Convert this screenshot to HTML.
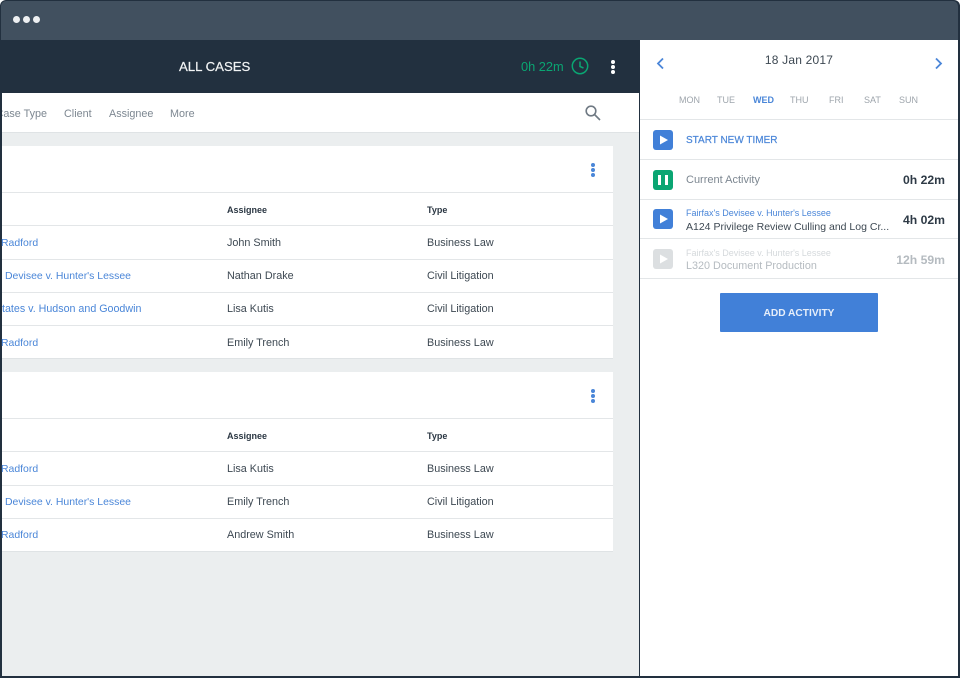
<!DOCTYPE html>
<html><head><meta charset="utf-8"><style>
html,body{margin:0;padding:0}
body{width:960px;height:678px;overflow:hidden;position:relative;background:#fff;font-family:"Liberation Sans",sans-serif}
#w{position:absolute;left:0;top:0;width:960px;height:678px;filter:blur(.3px)}
.b{position:absolute}
.t{position:absolute;white-space:nowrap;line-height:14px;font-size:10.8px;color:#3d4852}
.l{color:#4a86d8;font-size:10.45px}
.h{font-weight:bold;font-size:9px;color:#2b3743}
.g{color:#7d8791}
.line{position:absolute;height:1px;background:#e3e6e8}
.d{position:absolute;width:4px;height:4px;border-radius:50%;background:#4a86d8}
.ib{position:absolute;width:20px;height:20px;border-radius:3px;background:#4180d8}
.m{font-size:12.2px;font-weight:bold;color:#2e3a46}
</style></head><body><div id="w">
<div class="b" style="left:0;top:0;width:960px;height:678px;background:#22303f;border-radius:6px 6px 0 0"></div>
<div class="b" style="left:1px;top:1px;width:957px;height:39px;background:#41505f;border-radius:5px 5px 0 0"></div>
<div class="b" style="left:13px;top:16px;width:7px;height:7px;border-radius:50%;background:#eef0f2"></div>
<div class="b" style="left:23px;top:16px;width:7px;height:7px;border-radius:50%;background:#eef0f2"></div>
<div class="b" style="left:33px;top:16px;width:7px;height:7px;border-radius:50%;background:#eef0f2"></div>

<div class="b" style="left:2px;top:40px;width:637px;height:636px;background:#ebeeef"></div>
<div class="b" style="left:0;top:40px;width:639px;height:53px;background:#22303f"></div>
<div class="t" style="left:179px;top:60px;font-size:13.2px;color:#f2f4f5;-webkit-text-stroke:.2px #f2f4f5">ALL CASES</div>
<div class="t" style="left:521px;top:60px;font-size:12.8px;color:#0aa572">0h 22m</div>
<svg class="b" style="left:571px;top:57px" width="18" height="18" viewBox="0 0 18 18" fill="none" stroke="#0aa572" stroke-width="1.5"><circle cx="9" cy="9" r="7.7"/><path d="M9 4.5V9.5L12.5 11"/></svg>
<div class="d" style="left:611px;top:60px;width:4px;height:4px;background:#fff"></div>
<div class="d" style="left:611px;top:65px;width:4px;height:4px;background:#fff"></div>
<div class="d" style="left:611px;top:70px;width:4px;height:4px;background:#fff"></div>

<div class="b" style="left:2px;top:93px;width:637px;height:39px;background:#fff;border-bottom:1px solid #dfe3e5"></div>
<div class="t g" style="left:2px;top:107px;width:45px;overflow:hidden;direction:rtl">Case Type</div>
<div class="t g" style="left:64px;top:107px">Client</div>
<div class="t g" style="left:109px;top:107px">Assignee</div>
<div class="t g" style="left:170px;top:107px">More</div>
<svg class="b" style="left:584px;top:104px" width="18" height="18" viewBox="0 0 18 18" fill="none" stroke="#6f7983" stroke-width="1.6"><circle cx="7" cy="7" r="4.8"/><path d="M10.5 10.5L16 16"/></svg>

<!-- card 1 -->
<div class="b" style="left:2px;top:146px;width:611px;height:213px;background:#fff;border-bottom:1px solid #dfe3e5;box-sizing:border-box"></div>
<div class="d" style="left:591px;top:163px"></div><div class="d" style="left:591px;top:168px"></div><div class="d" style="left:591px;top:173px"></div>
<div class="line" style="left:2px;top:192px;width:611px"></div>
<div class="t h" style="left:227px;top:203px">Assignee</div>
<div class="t h" style="left:427px;top:203px">Type</div>
<div class="line" style="left:2px;top:225px;width:611px"></div>
<div class="t l" style="left:1px;top:237px">Radford</div><div class="t" style="left:227px;top:236px">John Smith</div><div class="t" style="left:427px;top:236px">Business Law</div>
<div class="line" style="left:2px;top:259px;width:611px"></div>
<div class="t l" style="left:5px;top:270px">Devisee v. Hunter's Lessee</div><div class="t" style="left:227px;top:269px">Nathan Drake</div><div class="t" style="left:427px;top:269px">Civil Litigation</div>
<div class="line" style="left:2px;top:292px;width:611px"></div>
<div class="t l" style="left:2px;top:302px;font-size:10.7px">tates v. Hudson and Goodwin</div><div class="t" style="left:227px;top:302px">Lisa Kutis</div><div class="t" style="left:427px;top:302px">Civil Litigation</div>
<div class="line" style="left:2px;top:325px;width:611px"></div>
<div class="t l" style="left:1px;top:337px">Radford</div><div class="t" style="left:227px;top:336px">Emily Trench</div><div class="t" style="left:427px;top:336px">Business Law</div>

<!-- card 2 -->
<div class="b" style="left:2px;top:372px;width:611px;height:180px;background:#fff;border-bottom:1px solid #dfe3e5;box-sizing:border-box"></div>
<div class="d" style="left:591px;top:389px"></div><div class="d" style="left:591px;top:394px"></div><div class="d" style="left:591px;top:399px"></div>
<div class="line" style="left:2px;top:418px;width:611px"></div>
<div class="t h" style="left:227px;top:429px">Assignee</div>
<div class="t h" style="left:427px;top:429px">Type</div>
<div class="line" style="left:2px;top:451px;width:611px"></div>
<div class="t l" style="left:1px;top:463px">Radford</div><div class="t" style="left:227px;top:462px">Lisa Kutis</div><div class="t" style="left:427px;top:462px">Business Law</div>
<div class="line" style="left:2px;top:485px;width:611px"></div>
<div class="t l" style="left:5px;top:496px">Devisee v. Hunter's Lessee</div><div class="t" style="left:227px;top:495px">Emily Trench</div><div class="t" style="left:427px;top:495px">Civil Litigation</div>
<div class="line" style="left:2px;top:518px;width:611px"></div>
<div class="t l" style="left:1px;top:529px">Radford</div><div class="t" style="left:227px;top:528px">Andrew Smith</div><div class="t" style="left:427px;top:528px">Business Law</div>

<!-- right panel -->
<div class="b" style="left:640px;top:40px;width:318px;height:636px;background:#fff"></div>
<svg class="b" style="left:655px;top:57px" width="10" height="13" viewBox="0 0 10 13" fill="none" stroke="#4a86d8" stroke-width="1.8"><path d="M8 1.5L3 6.5L8 11.5"/></svg>
<svg class="b" style="left:934px;top:57px" width="10" height="13" viewBox="0 0 10 13" fill="none" stroke="#4a86d8" stroke-width="1.8"><path d="M2 1.5L7 6.5L2 11.5"/></svg>
<div class="t" style="left:640px;width:318px;text-align:center;top:53px;font-size:12px;letter-spacing:.2px">18 Jan 2017</div>
<div class="t" style="left:679px;top:93px;font-size:9px;color:#9ea5ac">MON</div>
<div class="t" style="left:717px;top:93px;font-size:9px;color:#9ea5ac">TUE</div>
<div class="t" style="left:753px;top:93px;font-size:9px;color:#4a86d8;font-weight:bold">WED</div>
<div class="t" style="left:790px;top:93px;font-size:9px;color:#9ea5ac">THU</div>
<div class="t" style="left:829px;top:93px;font-size:9px;color:#9ea5ac">FRI</div>
<div class="t" style="left:864px;top:93px;font-size:9px;color:#9ea5ac">SAT</div>
<div class="t" style="left:899px;top:93px;font-size:9px;color:#9ea5ac">SUN</div>
<div class="line" style="left:640px;top:119px;width:318px"></div>
<div class="ib" style="left:653px;top:130px"></div>
<svg class="b" style="left:653px;top:130px" width="20" height="20"><path d="M7 5.5L15 10L7 14.5Z" fill="#fff"/></svg>
<div class="t l" style="left:686px;top:134px;font-size:10px;-webkit-text-stroke:.2px #4a86d8">START NEW TIMER</div>
<div class="line" style="left:640px;top:159px;width:318px"></div>
<div class="ib" style="left:653px;top:170px;background:#0aa572"></div>
<div class="b" style="left:658px;top:175px;width:3px;height:10px;background:#fff"></div>
<div class="b" style="left:665px;top:175px;width:3px;height:10px;background:#fff"></div>
<div class="t g" style="left:686px;top:173px;font-size:11px">Current Activity</div>
<div class="t m" style="right:15px;top:173px">0h 22m</div>
<div class="line" style="left:640px;top:199px;width:318px"></div>
<div class="ib" style="left:653px;top:209px"></div>
<svg class="b" style="left:653px;top:209px" width="20" height="20"><path d="M7 5.5L15 10L7 14.5Z" fill="#fff"/></svg>
<div class="t l" style="left:686px;top:206px;font-size:9px">Fairfax's Devisee v. Hunter's Lessee</div>
<div class="t" style="left:686px;top:220px;font-size:10.5px">A124 Privilege Review Culling and Log Cr...</div>
<div class="t m" style="right:15px;top:213px">4h 02m</div>
<div class="line" style="left:640px;top:238px;width:318px"></div>
<div class="ib" style="left:653px;top:249px;background:#dcdfe1"></div>
<svg class="b" style="left:653px;top:249px" width="20" height="20"><path d="M7 5.5L15 10L7 14.5Z" fill="#fff"/></svg>
<div class="t" style="left:686px;top:246px;font-size:9px;color:#d5d9dc">Fairfax's Devisee v. Hunter's Lessee</div>
<div class="t" style="left:686px;top:259px;color:#b5bbc0">L320 Document Production</div>
<div class="t m" style="right:15px;top:253px;color:#b5bbc0">12h 59m</div>
<div class="line" style="left:640px;top:278px;width:318px"></div>
<div class="b" style="left:720px;top:293px;width:158px;height:39px;background:#4180d8;border-radius:1px"></div>
<div class="t" style="left:720px;width:158px;text-align:center;top:307px;font-size:10.2px;font-weight:bold;color:#e6eefa">ADD ACTIVITY</div>
</div></body></html>
